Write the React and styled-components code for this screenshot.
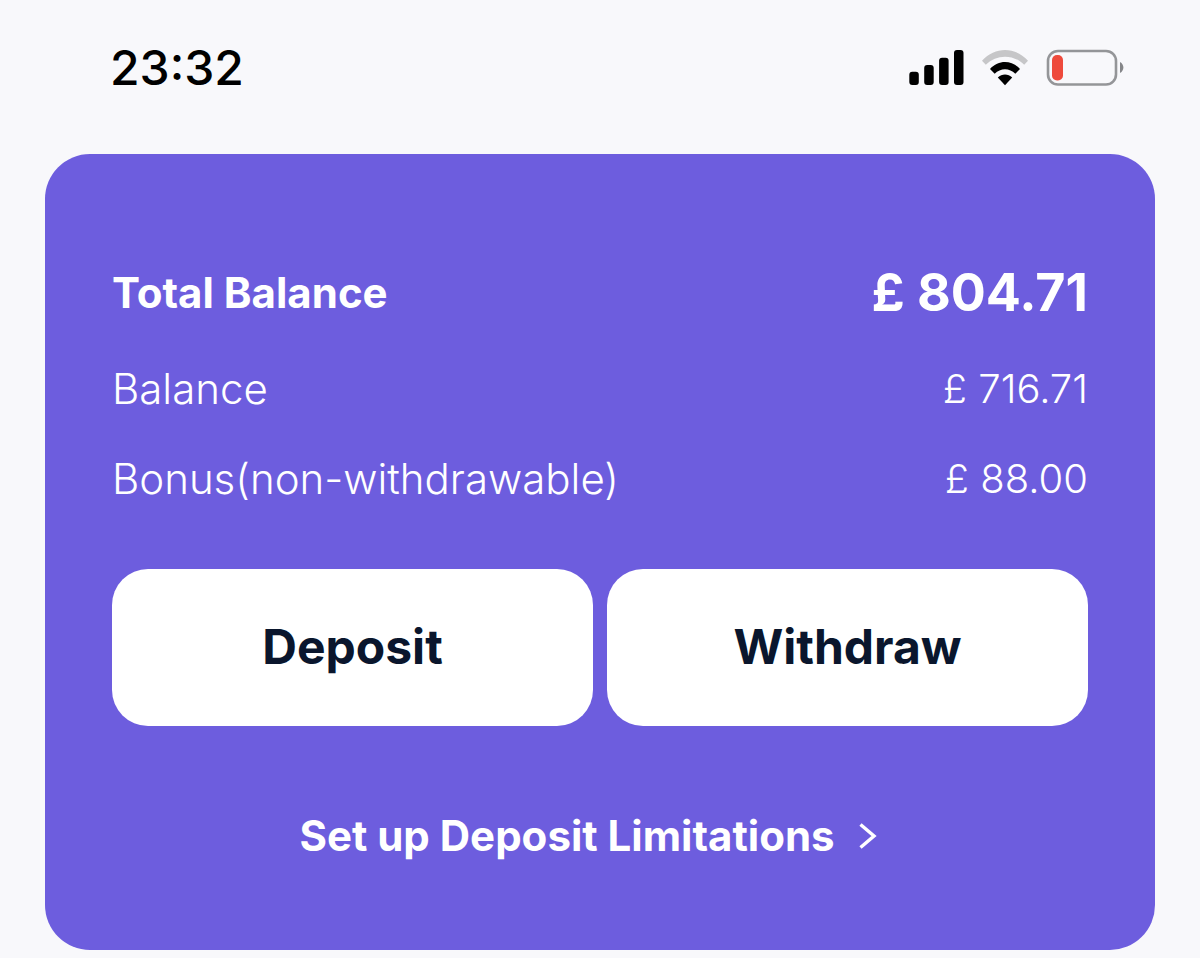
import React from "react";
import styled, { createGlobalStyle } from "styled-components";

const GlobalStyle = createGlobalStyle`
  *, *::before, *::after {
    box-sizing: border-box;
  }
  body {
    margin: 0;
    background-color: #f8f8fb;
    font-family: Inter, "Liberation Sans", sans-serif;
  }
`;

const StatusBar = styled.header`
  display: flex;
  justify-content: space-between;
  align-items: center;
  padding: 40px 76px 58px 110px;
  color: #000;
`;

const Time = styled.time`
  font-size: 48px;
  line-height: 56px;
  font-weight: 500;
`;

const StatusIcons = styled.div`
  display: flex;
  align-items: center;
  gap: 18px;

  svg {
    display: block;
  }
`;

const Card = styled.main`
  margin: 0 45px 8px;
  padding: 109px 67px 90px;
  border-radius: 45px;
  background-color: #6d5dde;
  color: #fff;
`;

const Balances = styled.dl`
  display: flex;
  flex-direction: column;
  gap: 42px;
  margin: 0;
`;

const BalanceRow = styled.div`
  display: flex;
  justify-content: space-between;
  align-items: center;
  font-size: 42px;
  line-height: ${(props) => (props.$total ? "60px" : "48px")};
  font-weight: ${(props) => (props.$total ? 700 : 300)};

  dd {
    margin: 0;
    font-size: ${(props) => (props.$total ? "52px" : "40px")};
  }
`;

const Actions = styled.div`
  display: grid;
  grid-template-columns: 1fr 1fr;
  gap: 14px;
  margin-top: 66px;
`;

const ActionButton = styled.button`
  padding: 50px 16px 51px;
  border: 0;
  border-radius: 36px;
  background-color: #fff;
  color: #0a162d;
  font-family: inherit;
  font-size: 48px;
  line-height: 56px;
  font-weight: 700;
  cursor: pointer;
`;

const LimitsLink = styled.a`
  display: flex;
  justify-content: center;
  align-items: center;
  gap: 18px;
  margin-top: 86px;
  color: #fff;
  font-size: 42px;
  line-height: 48px;
  font-weight: 700;
  text-decoration: none;
`;

const SignalIcon = () => (
  <svg width="55" height="36" viewBox="0 0 55 36" aria-hidden="true">
    <rect x="0.3" y="21.8" width="9.5" height="13.2" rx="3" />
    <rect x="15.2" y="15" width="9.5" height="20" rx="3" />
    <rect x="30.1" y="7.8" width="9.5" height="27.2" rx="3" />
    <rect x="45" y="0" width="9.5" height="35" rx="3" />
  </svg>
);

const WifiIcon = () => (
  <svg width="46" height="36" viewBox="0 0 46 36" aria-hidden="true">
    <path
      d="M0 10.7C13-3.5 33-3.5 46 10.7L42.2 14.8C31.5 4 14.5 4 3.8 14.8Z"
      fill="#c6c6c8"
    />
    <path d="M8 19C16.5 9.7 29.5 9.7 38 19L33.3 23.8C27.5 17.8 18.5 17.8 12.7 23.8Z" />
    <path d="M15.8 27.6C19.8 23.4 26.2 23.4 30.2 27.6L23 35.2Z" />
  </svg>
);

const BatteryIcon = () => (
  <svg width="78" height="38" viewBox="0 0 78 38" aria-hidden="true">
    <rect
      x="2"
      y="2"
      width="68"
      height="33.5"
      rx="10"
      fill="none"
      stroke="#949598"
      strokeWidth="2.6"
    />
    <rect x="6" y="6" width="11" height="25.5" rx="5" fill="#ee4a3c" />
    <path d="M74 13C78.5 15.5 78.5 21.5 74 24Z" fill="#858689" />
  </svg>
);

const ChevronIcon = () => (
  <svg
    width="48"
    height="30"
    viewBox="0 0 48 30"
    fill="none"
    stroke="currentColor"
    strokeWidth="3.4"
    aria-hidden="true"
  >
    <path d="M7.5 3.5L21 15L7.5 26.5" />
  </svg>
);

const balances = [
  { label: "Total Balance", amount: "£ 804.71", total: true },
  { label: "Balance", amount: "£ 716.71" },
  { label: "Bonus(non-withdrawable)", amount: "£ 88.00" },
];

function App() {
  return (
    <>
      <GlobalStyle />
      <StatusBar>
        <Time>23:32</Time>
        <StatusIcons>
          <SignalIcon />
          <WifiIcon />
          <BatteryIcon />
        </StatusIcons>
      </StatusBar>
      <Card>
        <Balances>
          {balances.map(({ label, amount, total }) => (
            <BalanceRow key={label} $total={total}>
              <dt>{label}</dt>
              <dd>{amount}</dd>
            </BalanceRow>
          ))}
        </Balances>
        <Actions>
          <ActionButton type="button">Deposit</ActionButton>
          <ActionButton type="button">Withdraw</ActionButton>
        </Actions>
        <LimitsLink href="#deposit-limitations">
          Set up Deposit Limitations
          <ChevronIcon />
        </LimitsLink>
      </Card>
    </>
  );
}

export default App;
